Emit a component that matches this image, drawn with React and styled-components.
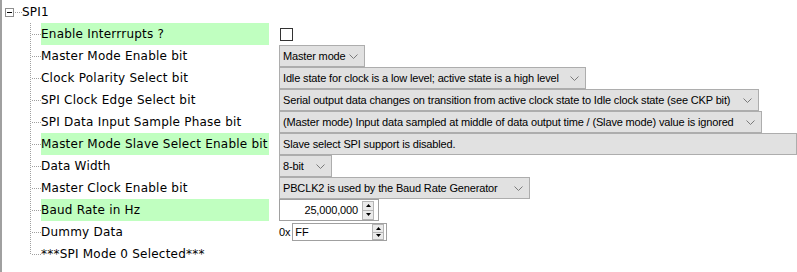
import React from 'react';
import styled, { createGlobalStyle } from 'styled-components';

const Global = createGlobalStyle`
  html, body { margin: 0; padding: 0; background: #fff; }
  body { width: 797px; height: 272px; overflow: hidden; }
`;

const Panel = styled.div`
  width: 797px;
  height: 272px;
  box-sizing: border-box;
  border-left: 2px solid #a0a0a0;
  padding-top: 1px;
  font-family: "DejaVu Sans", Verdana, sans-serif;
  font-size: 12px;
  letter-spacing: 0.22px;
  color: #000;
`;

const RootRow = styled.div`
  height: 22px;
  display: flex;
  align-items: center;
  padding-left: 3px;
`;

const Expander = styled.div`
  width: 9px;
  height: 9px;
  box-sizing: border-box;
  border: 1px solid #8e8e8e;
  background: #fff;
  display: flex;
  align-items: center;
  justify-content: center;
  &::after {
    content: "";
    width: 5px;
    height: 1px;
    background: #000;
  }
`;

const RootText = styled.span`
  line-height: 22px;
`;

const Row = styled.div`
  height: 22px;
  display: flex;
  align-items: stretch;
`;

const Label = styled.div`
  width: 228px;
  flex: none;
  line-height: 22px;
  white-space: nowrap;
  background: ${(p) => (p.$highlight ? '#c0ffc0' : 'transparent')};
`;

const ValueCell = styled.div`
  flex: 1;
  margin-left: 10px;
  display: flex;
  align-items: center;
  font-family: "Liberation Sans", Arial, sans-serif;
  font-size: 11px;
  letter-spacing: -0.15px;
  min-width: 0;
`;

const Checkbox = styled.div`
  width: 13px;
  height: 13px;
  box-sizing: border-box;
  border: 1px solid #333;
  background: #fff;
  margin-left: 1px;
`;

const Combo = styled.div`
  height: 22px;
  box-sizing: border-box;
  width: ${(p) => (p.$width ? `${p.$width}px` : 'auto')};
  flex: ${(p) => (p.$width ? 'none' : '1')};
  border: 1px solid #adadad;
  background: #e1e1e1;
  display: flex;
  align-items: center;
  justify-content: space-between;
  padding: 0 6px 0 3px;
  white-space: nowrap;
  overflow: hidden;
`;

const SpinBox = styled.div`
  width: ${(p) => p.$width}px;
  height: ${(p) => p.$height}px;
  box-sizing: border-box;
  border: 1px solid #a0a0a0;
  background: #fff;
  display: flex;
  align-items: center;
  padding: 0 ${(p) => p.$padRight}px 0 2px;
  gap: 4px;
`;

const SpinText = styled.span`
  flex: 1;
  text-align: ${(p) => p.$align};
`;

const SpinButtons = styled.div`
  width: 12px;
  height: ${(p) => p.$height}px;
  display: flex;
  flex-direction: column;
`;

const SpinButton = styled.div`
  flex: 1;
  box-sizing: border-box;
  border: 1px solid #b4b4b4;
  background: #eaeaea;
  display: flex;
  align-items: center;
  justify-content: center;
  & + & { border-top: none; }
`;

const Prefix = styled.span`
  margin-right: 2px;
`;

const Chevron = () => (
  <svg width="9" height="5" viewBox="0 0 9 5" style={{ flex: 'none' }}>
    <polyline points="0.5,0.5 4.5,4.5 8.5,0.5" fill="none" stroke="#7a7a7a" strokeWidth="1" />
  </svg>
);

const Tri = ({ up }) => (
  <svg width="5" height="3" viewBox="0 0 5 3">
    <polygon points={up ? '2.5,0 5,3 0,3' : '0,0 5,0 2.5,3'} fill="#000" />
  </svg>
);

const Spinner = ({ width, height, padRight, align, btnHeight, children }) => (
  <SpinBox $width={width} $height={height} $padRight={padRight}>
    <SpinText $align={align}>{children}</SpinText>
    <SpinButtons $height={btnHeight}>
      <SpinButton><Tri up /></SpinButton>
      <SpinButton><Tri /></SpinButton>
    </SpinButtons>
  </SpinBox>
);

const Connector = ({ last }) => (
  <svg width="39" height="22" viewBox="0 0 39 22" style={{ flex: 'none' }} shapeRendering="crispEdges">
    <line x1="28.5" y1="0" x2="28.5" y2={last ? 11 : 22} stroke="#a0a0a0" strokeDasharray="1 1" />
    <line x1="30" y1="11.5" x2="39" y2="11.5" stroke="#a0a0a0" strokeDasharray="1 1" />
  </svg>
);

const RootConnector = () => (
  <svg width="8" height="22" viewBox="0 0 8 22" style={{ flex: 'none' }} shapeRendering="crispEdges">
    <line x1="1" y1="11.5" x2="8" y2="11.5" stroke="#a0a0a0" strokeDasharray="1 1" />
  </svg>
);

const rows = [
  { label: 'Enable Interrrupts ?', hl: true, value: <Checkbox /> },
  { label: 'Master Mode Enable bit', value: <Combo $width={86}>Master mode<Chevron /></Combo> },
  { label: 'Clock Polarity Select bit', value: <Combo $width={307}>Idle state for clock is a low level; active state is a high level<Chevron /></Combo> },
  { label: 'SPI Clock Edge Select bit', value: <Combo $width={480}>Serial output data changes on transition from active clock state to Idle clock state (see CKP bit)<Chevron /></Combo> },
  { label: 'SPI Data Input Sample Phase bit', value: <Combo $width={483}>(Master mode) Input data sampled at middle of data output time / (Slave mode) value is ignored<Chevron /></Combo> },
  { label: 'Master Mode Slave Select Enable bit', hl: true, value: <Combo>Slave select SPI support is disabled.</Combo> },
  { label: 'Data Width', value: <Combo $width={53}>8-bit<Chevron /></Combo> },
  { label: 'Master Clock Enable bit', value: <Combo $width={251}>PBCLK2 is used by the Baud Rate Generator<Chevron /></Combo> },
  { label: 'Baud Rate in Hz', hl: true, value: <Spinner width={100} height={22} padRight={4} btnHeight={19} align="right">25,000,000</Spinner> },
  { label: 'Dummy Data', value: (<><Prefix>0x</Prefix><Spinner width={95} height={18} padRight={2} btnHeight={16} align="left">FF</Spinner></>) },
  { label: '***SPI Mode 0 Selected***', last: true },
];

export default function App() {
  return (
    <>
      <Global />
      <Panel>
        <RootRow>
          <Expander />
          <RootConnector />
          <RootText>SPI1</RootText>
        </RootRow>
        {rows.map((r) => (
          <Row key={r.label}>
            <Connector last={r.last} />
            <Label $highlight={r.hl}>{r.label}</Label>
            <ValueCell>{r.value}</ValueCell>
          </Row>
        ))}
      </Panel>
    </>
  );
}
